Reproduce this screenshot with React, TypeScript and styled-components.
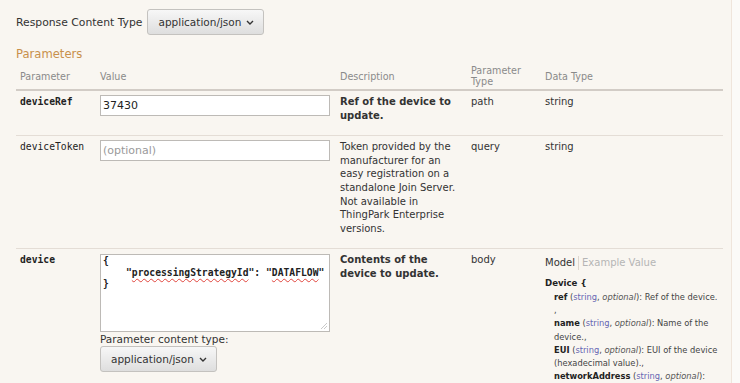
import React from "react";
import styled, { createGlobalStyle } from "styled-components";

const GlobalStyle = createGlobalStyle`
  html, body {
    margin: 0;
    padding: 0;
    background: #fbfaf8;
  }
  body {
    font-family: "DejaVu Sans", sans-serif;
    color: #333;
  }
`;

const columns = [80, 240, 131, 74, 182];

function Chevron() {
  return (
    <svg width="8" height="5" viewBox="0 0 8 5">
      <polyline
        points="1,1 4,4 7,1"
        fill="none"
        stroke="#333"
        strokeWidth="1.4"
      />
    </svg>
  );
}

function Grip() {
  return (
    <svg width="8" height="8" viewBox="0 0 8 8">
      <line x1="7" y1="1" x2="1" y2="7" stroke="#bbb" strokeWidth="0.8" />
      <line x1="7" y1="4" x2="4" y2="7" stroke="#bbb" strokeWidth="0.8" />
    </svg>
  );
}

function App() {
  return (
    <>
      <GlobalStyle />
      <Operation>
        <ResponseRow>
          <Label>Response Content Type</Label>
          <SelectButton>
            application/json <Chevron />
          </SelectButton>
        </ResponseRow>

        <Heading>Parameters</Heading>

        <Table>
          <colgroup>
            {columns.map((w, i) => (
              <col key={i} style={{ width: w }} />
            ))}
          </colgroup>
          <thead>
            <tr>
              <Th>Parameter</Th>
              <Th>Value</Th>
              <Th>Description</Th>
              <Th>
                Parameter
                <br />
                Type
              </Th>
              <Th>Data Type</Th>
            </tr>
          </thead>
          <tbody>
            <Row>
              <Td>
                <ParamName $required>deviceRef</ParamName>
              </Td>
              <Td>
                <TextInput defaultValue="37430" />
              </Td>
              <Td>
                <Desc $bold>Ref of the device to update.</Desc>
              </Td>
              <Td>
                <Desc>path</Desc>
              </Td>
              <Td>
                <Desc>string</Desc>
              </Td>
            </Row>
            <Row>
              <Td>
                <ParamName>deviceToken</ParamName>
              </Td>
              <Td>
                <TextInput placeholder="(optional)" />
              </Td>
              <Td>
                <Desc>
                  Token provided by the manufacturer for an easy registration
                  on a standalone Join Server. Not available in ThingPark
                  Enterprise versions.
                </Desc>
              </Td>
              <Td>
                <Desc>query</Desc>
              </Td>
              <Td>
                <Desc>string</Desc>
              </Td>
            </Row>
            <Row>
              <Td>
                <ParamName $required>device</ParamName>
              </Td>
              <Td>
                <CodeBox role="textbox">
                  <CodeLine>{"{"}</CodeLine>
                  <CodeLine $indent>
                    "<Misspelled>processingStrategyId</Misspelled>": "
                    <Misspelled>DATAFLOW</Misspelled>"
                  </CodeLine>
                  <CodeLine>{"}"}</CodeLine>
                  <GripCorner>
                    <Grip />
                  </GripCorner>
                </CodeBox>
                <SmallLabel>Parameter content type:</SmallLabel>
                <SelectButton $width={117}>
                  application/json <Chevron />
                </SelectButton>
              </Td>
              <Td>
                <Desc $bold>Contents of the device to update.</Desc>
              </Td>
              <Td>
                <Desc>body</Desc>
              </Td>
              <Td>
                <Tabs>
                  <Tab $active>Model</Tab>
                  <Tab>Example Value</Tab>
                </Tabs>
                <Model>
                  <ModelTitle>Device {"{"}</ModelTitle>
                  <Props>
                    <PropLine>
                      <b>ref</b> (<PropType>string</PropType>,{" "}
                      <i>optional</i>): Ref of the device.
                    </PropLine>
                    <PropLine>,</PropLine>
                    <PropLine>
                      <b>name</b> (<PropType>string</PropType>,{" "}
                      <i>optional</i>): Name of the
                    </PropLine>
                    <PropLine>device.,</PropLine>
                    <PropLine>
                      <b>EUI</b> (<PropType>string</PropType>,{" "}
                      <i>optional</i>): EUI of the device
                    </PropLine>
                    <PropLine>(hexadecimal value).,</PropLine>
                    <PropLine>
                      <b>networkAddress</b> (<PropType>string</PropType>,{" "}
                      <i>optional</i>):
                    </PropLine>
                  </Props>
                </Model>
              </Td>
            </Row>
          </tbody>
        </Table>
      </Operation>
    </>
  );
}

const Operation = styled.div`
  box-sizing: border-box;
  width: 732px;
  min-height: 383px;
  padding: 9px 8px 0 16px;
  background: #f9f6f1;
  border-right: 1px solid #efe5dc;
`;

const ResponseRow = styled.div`
  display: flex;
  align-items: center;
  gap: 5px;
`;

const Label = styled.span`
  font-size: 10.8px;
  color: #333;
`;

const SelectButton = styled.div<{ $width?: number }>`
  box-sizing: border-box;
  display: inline-flex;
  align-items: center;
  gap: 5px;
  width: ${(p) => p.$width ?? 117}px;
  height: 26px;
  padding: 0 0 0 10px;
  border: 1px solid #c4c2bf;
  border-radius: 3px;
  background: linear-gradient(#f7f7f7, #dedede);
  font-size: 10.5px;
  color: #333;
`;

const Heading = styled.div`
  margin-top: 12px;
  font-size: 11.6px;
  line-height: 14px;
  color: #c8904c;
`;

const Table = styled.table`
  width: 707px;
  table-layout: fixed;
  border-collapse: collapse;
`;

const Th = styled.th`
  padding: 4px 4px 2px;
  font-size: 9.6px;
  line-height: 11px;
  font-weight: normal;
  text-align: left;
  vertical-align: middle;
  color: #8a8a8a;
  border-bottom: 2px solid #d2ccc6;
`;

const Row = styled.tr`
  border-bottom: 1px solid #e4ddd6;
`;

const Td = styled.td`
  padding: 4px 4px 13px;
  vertical-align: top;
`;

const ParamName = styled.div<{ $required?: boolean }>`
  font-family: "DejaVu Sans Mono", monospace;
  font-size: 9.7px;
  line-height: 13.6px;
  font-weight: ${(p) => (p.$required ? "bold" : "normal")};
  color: #222;
`;

const TextInput = styled.input`
  box-sizing: border-box;
  display: block;
  width: 230px;
  height: 21px;
  margin: 0;
  padding: 0 2px;
  border: 1px solid #bdbab6;
  background: #fff;
  font-family: "DejaVu Sans", sans-serif;
  font-size: 11px;
  color: #222;
  outline: none;

  &::placeholder {
    color: #9a9a9a;
  }
`;

const Desc = styled.div<{ $bold?: boolean }>`
  font-size: 10px;
  line-height: 13.6px;
  font-weight: ${(p) => (p.$bold ? "bold" : "normal")};
  color: #333;
`;

const CodeBox = styled.div`
  position: relative;
  box-sizing: border-box;
  width: 230px;
  height: 78px;
  margin-top: 1px;
  padding: 0 2px;
  border: 1px solid #bdbab6;
  background: #fff;
  font-family: "DejaVu Sans Mono", monospace;
  font-size: 9.7px;
  font-weight: bold;
  line-height: 11.5px;
  color: #222;
`;

const CodeLine = styled.div<{ $indent?: boolean }>`
  padding-left: ${(p) => (p.$indent ? "23px" : "0")};
  white-space: nowrap;
`;

const Misspelled = styled.span`
  text-decoration: underline wavy #e0443c;
  text-decoration-thickness: 1px;
  text-underline-offset: 2px;
  text-decoration-skip-ink: none;
`;

const GripCorner = styled.span`
  position: absolute;
  right: 1px;
  bottom: 1px;
  line-height: 0;
`;

const SmallLabel = styled.div`
  margin-top: 0;
  font-size: 10.5px;
  line-height: 14px;
  color: #333;
`;

const Tabs = styled.div`
  display: flex;
  align-items: center;
  margin-top: 3px;
  font-size: 10px;
  line-height: 14px;
`;

const Tab = styled.span<{ $active?: boolean }>`
  padding-right: ${(p) => (p.$active ? "3px" : "0")};
  padding-left: ${(p) => (p.$active ? "0" : "3px")};
  color: ${(p) => (p.$active ? "#333" : "#b5b5b5")};
  border-right: ${(p) => (p.$active ? "1px solid #ddd6cf" : "none")};
`;

const Model = styled.div`
  margin-top: 7px;
  font-size: 8.3px;
  line-height: 13.3px;
  color: #444;
`;

const ModelTitle = styled.div`
  font-weight: bold;
  font-size: 8.6px;
  color: #222;
`;

const Props = styled.div`
  padding-left: 9px;
`;

const PropLine = styled.div`
  white-space: nowrap;

  b {
    color: #222;
  }
  i {
    color: #555;
  }
`;

const PropType = styled.span`
  color: #6666b3;
`;

export default App;
